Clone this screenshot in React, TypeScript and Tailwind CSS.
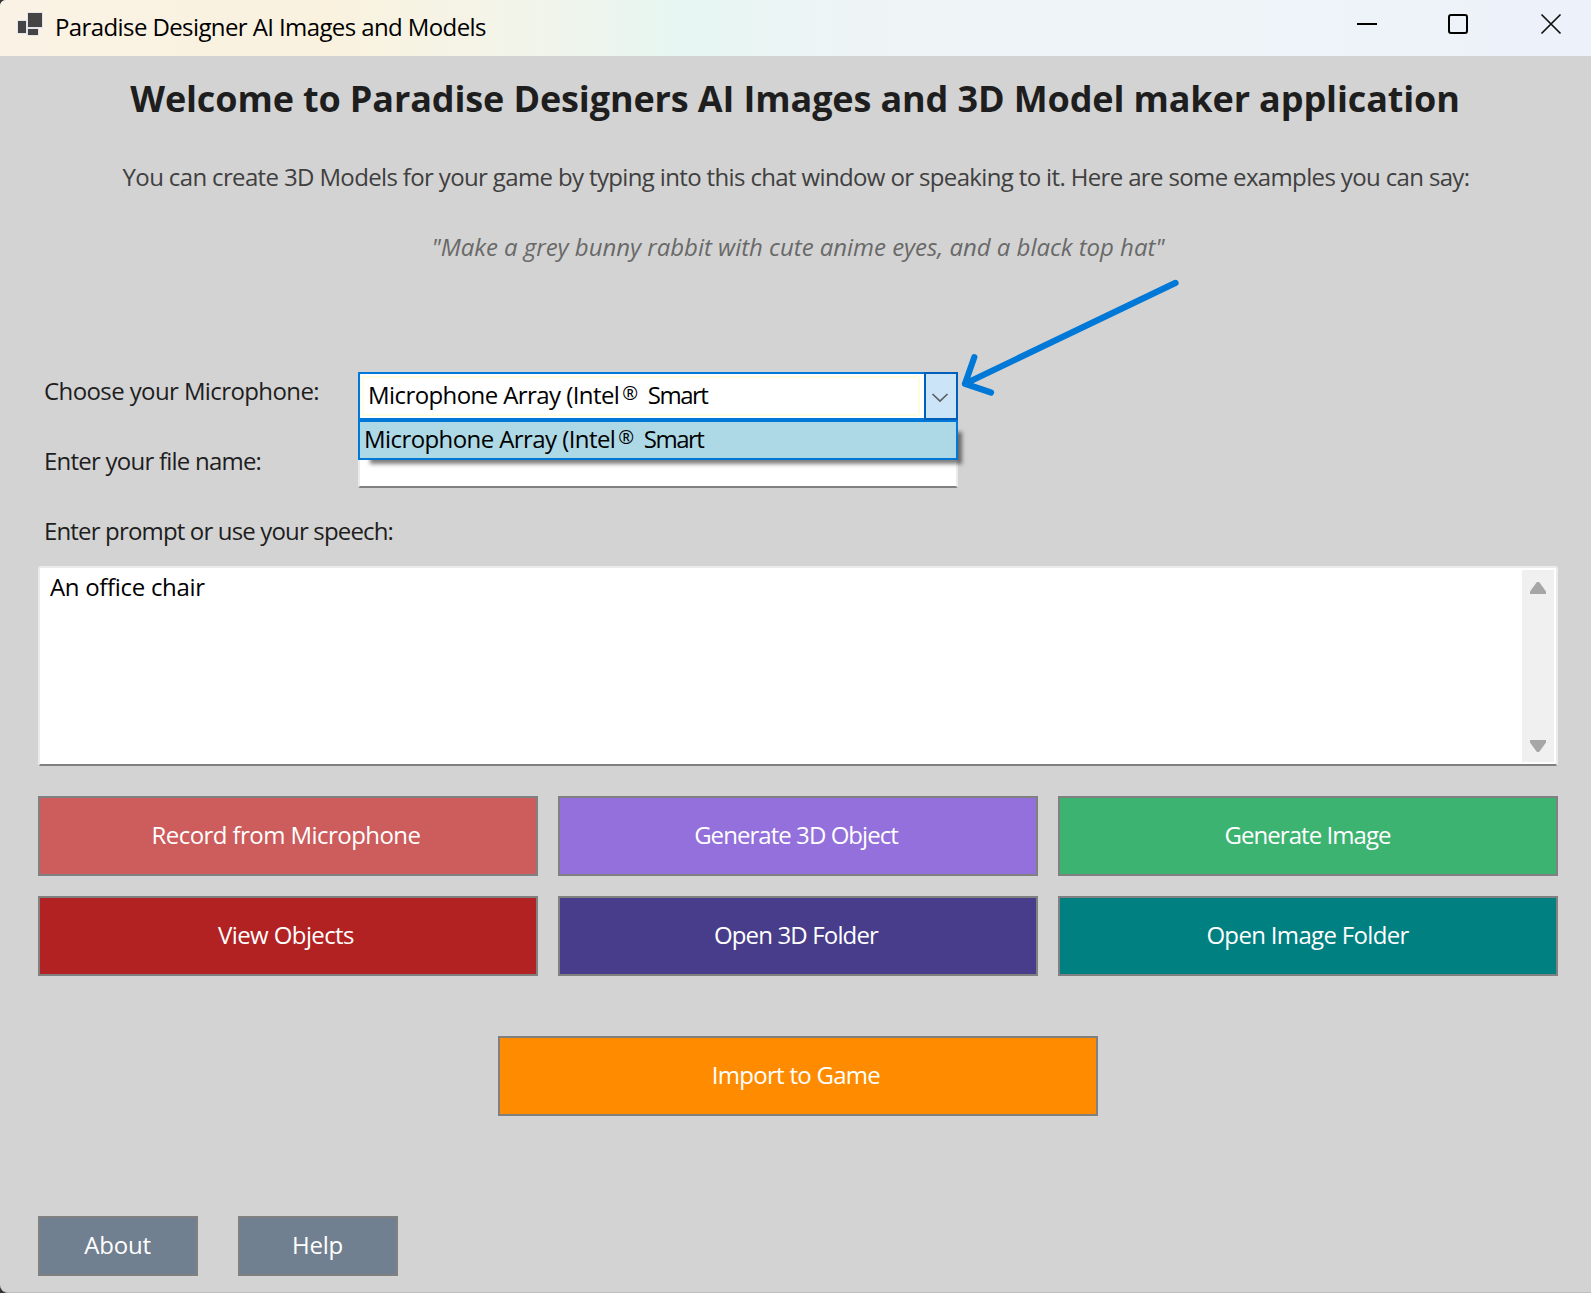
import type { ReactNode } from 'react';

function TitleBar() {
  return (
    <header className="flex h-14 shrink-0 items-start bg-[linear-gradient(90deg,#faf2e4_0%,#faf2df_21%,#f3f4e9_32%,#e7f6f2_43%,#eef4f6_54%,#eff4f9_72%,#edf3f8_90%,#edf1fb_100%)]">
      <svg className="mt-3 ml-[17px] h-6 w-[27px]" viewBox="17 12 27 24">
        <g fill="#444444" stroke="#e4e4ec" strokeWidth="1">
          <rect x="17.5" y="20.5" width="9" height="13" />
          <rect x="27.5" y="28.5" width="11" height="7" />
          <rect x="27.5" y="12.5" width="15" height="15" />
        </g>
      </svg>
      <span className="ml-[11px] text-2xl leading-[53px] tracking-[-0.6px] whitespace-nowrap text-black">
        Paradise Designer AI Images and Models
      </span>
      <div className="mt-[13px] mr-[29px] ml-auto flex gap-[69px]">
        <svg className="h-[22px] w-[22px]" viewBox="0 0 22 22">
          <path d="M0 11H20" stroke="#000" strokeWidth="2" />
        </svg>
        <svg className="h-[22px] w-[22px]" viewBox="0 0 22 22">
          <rect x="1" y="2" width="18" height="18" rx="2" fill="none" stroke="#000" strokeWidth="2" />
        </svg>
        <svg className="ml-[1px] h-[22px] w-[22px]" viewBox="0 0 22 22">
          <path d="M1.5 1.5L20.5 20.5M20.5 1.5L1.5 20.5" stroke="#111" strokeWidth="1.7" />
        </svg>
      </div>
    </header>
  );
}

function DeviceName() {
  return (
    <span className="flex whitespace-pre">
      <span className="tracking-[-0.58px]">Microphone Array (Intel</span>
      <span className="relative top-[2px] ml-[3px] w-[25.5px] text-[19px]">®</span>
      <span className="tracking-[-1.5px]">Smart</span>
    </span>
  );
}

function Button({ className, children }: { className: string; children: ReactNode }) {
  return (
    <button className={`border-2 border-[#808080] pb-[3px] whitespace-nowrap text-white ${className}`}>
      {children}
    </button>
  );
}

export default function App() {
  return (
    <div className="bg-[#333333] font-['Open_Sans',sans-serif]">
      <div className="relative flex h-[1293px] w-[1591px] flex-col overflow-hidden rounded-tl-[6px] rounded-bl-[8px] border-b border-[#bdbdbd] bg-[#d3d3d3] text-2xl text-[#1e1e1e]">
        <TitleBar />

        <h1 className="h-[84px] pt-[1px] pr-[1px] text-center text-[36px] leading-[84px] font-bold tracking-[-0.13px] whitespace-nowrap">
          Welcome to Paradise Designers AI Images and 3D Model maker application
        </h1>
        <p className="pl-[1px] text-center leading-[73px] tracking-[-0.64px] whitespace-nowrap text-[#404040]">
          You can create 3D Models for your game by typing into this chat window or speaking to it. Here are some examples you can say:
        </p>
        <p className="pl-[5px] text-center leading-[67px] tracking-[-0.03px] whitespace-nowrap text-[#696969] italic">
          &quot;Make a grey bunny rabbit with cute anime eyes, and a black top hat&quot;
        </p>

        <section className="mt-[92px] flex h-[194px] shrink-0 pl-[44px]">
          <div className="flex w-[314px] flex-col gap-8 leading-[38px] whitespace-nowrap">
            <label className="tracking-[-0.6px]">Choose your Microphone:</label>
            <label className="tracking-[-0.77px]">Enter your file name:</label>
            <label className="tracking-[-0.84px]">Enter prompt or use your speech:</label>
          </div>
          <div className="relative flex w-[600px] flex-col">
            <div className="flex h-12 border-2 border-[#0078d7] bg-white text-black">
              <div className="m-[2px] mr-1 flex flex-1 items-center border-2 border-[#fffde0] pb-[3px] pl-[4px]">
                <DeviceName />
              </div>
              <div className="-my-[2px] -mr-[2px] flex w-[34px] items-center justify-center border-2 border-[#005fb8] bg-[#cce4f7] pr-[2px]">
                <svg className="mt-1 h-[10px] w-[18px]" viewBox="0 0 18 10">
                  <path d="M1.5 1L9 8L16.5 1" fill="none" stroke="#5a5f66" strokeWidth="1.7" />
                </svg>
              </div>
            </div>
            <div className="absolute top-12 left-0 z-10 flex h-10 w-full items-center border-2 border-[#0078d7] bg-[#add8e6] pb-[3px] pl-[4px] text-black shadow-[8px_8px_4px_-4px_rgba(0,0,0,0.5)]">
              <DeviceName />
            </div>
            <div className="mt-[22px] h-[46px] rounded-[2px] border-2 border-[#ebebeb] border-b-[#808080] bg-white" />
          </div>
        </section>

        <section className="mr-[33px] ml-[38px] flex h-[200px] shrink-0 rounded-[3px] border-2 border-[#ebebeb] border-b-[#808080] bg-white text-black">
          <div className="flex-1 pl-[10px] leading-[38px] tracking-[-0.31px]">An office chair</div>
          <div className="my-[2px] mr-[2px] flex w-8 flex-col items-center justify-between bg-[#f0f0f0] pt-3 pb-[10px]">
            <svg className="h-3 w-4" viewBox="0 0 16 12">
              <path d="M0 12V9.5L6.5 0.5Q8 -0.7 9.5 0.5L16 9.5V12Z" fill="#a6a6a6" />
            </svg>
            <svg className="h-3 w-4" viewBox="0 0 16 12">
              <path d="M0 0V2.5L6.5 11.5Q8 12.7 9.5 11.5L16 2.5V0Z" fill="#a6a6a6" />
            </svg>
          </div>
        </section>

        <section className="mt-[30px] mr-[33px] ml-[38px] grid shrink-0 grid-cols-[500px_480px_500px] grid-rows-[80px_80px] gap-5">
          <Button className="bg-[#cd5c5c] pr-[4px] tracking-[-0.56px]">Record from Microphone</Button>
          <Button className="bg-[#9370db] pr-[4px] tracking-[-0.95px]">Generate 3D Object</Button>
          <Button className="bg-[#3cb371] pr-[1px] tracking-[-0.94px]">Generate Image</Button>
          <Button className="bg-[#b22222] pr-[4px] tracking-[-0.6px]">View Objects</Button>
          <Button className="bg-[#483d8b] pr-[4px] tracking-[-0.85px]">Open 3D Folder</Button>
          <Button className="bg-[#008080] pr-[1px] tracking-[-0.67px]">Open Image Folder</Button>
        </section>

        <Button className="mt-[60px] ml-[498px] h-20 w-[600px] shrink-0 bg-[#ff8c00] pr-[4px] tracking-[-0.72px]">
          Import to Game
        </Button>

        <footer className="mt-[100px] ml-[38px] flex gap-10">
          <Button className="h-[60px] w-40 bg-[#708090] pr-[1px] tracking-[-0.2px]">About</Button>
          <Button className="h-[60px] w-40 bg-[#708090] pr-[1px] tracking-[-0.2px]">Help</Button>
        </footer>

        <svg className="pointer-events-none absolute top-[270px] left-[950px] z-20 h-[140px] w-[240px]" viewBox="950 270 240 140">
          <path
            d="M1175.5 282.9L965 383.7M974.3 357.2L965 383.8L991 392.5"
            fill="none"
            stroke="#0078d7"
            strokeWidth="6.2"
            strokeLinecap="round"
            strokeLinejoin="round"
          />
        </svg>
      </div>
    </div>
  );
}
